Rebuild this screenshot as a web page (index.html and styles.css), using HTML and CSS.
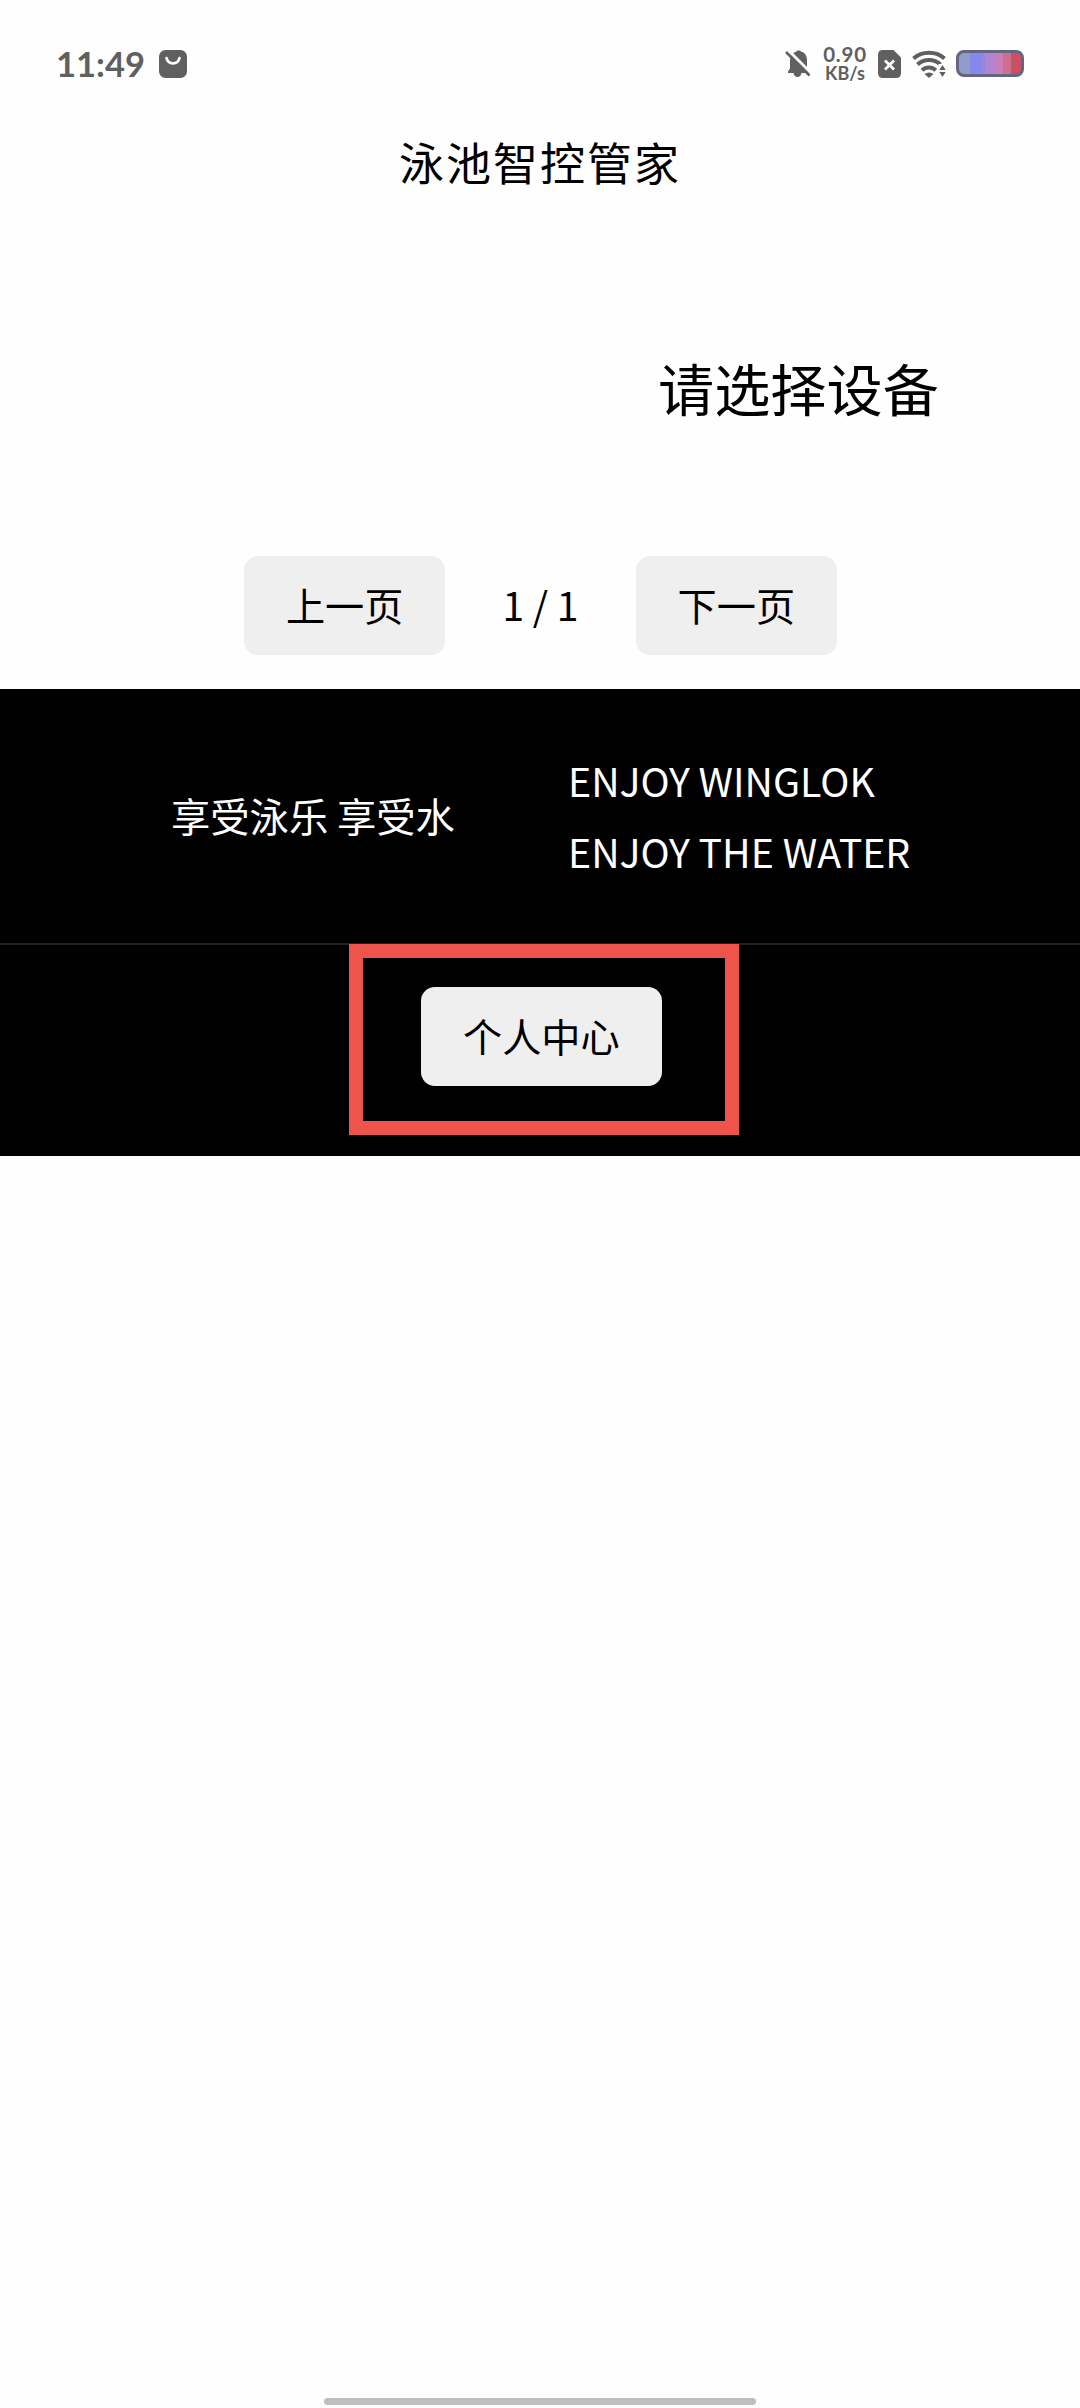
FILE: index.html
```html
<!DOCTYPE html>
<html lang="zh-CN">
<head>
<meta charset="utf-8">
<title>泳池智控管家</title>
<link rel="stylesheet" href="styles.css">
</head>
<body>
<div class="screen">
  <header class="status">
    <span class="clock">11:49</span>
    <svg class="app-icon" width="28" height="28" viewBox="0 0 28 28"><rect width="28" height="28" rx="6.5" fill="#606060"/><path d="M7.5 8c.8 3.500 3.300 5.300 6.500 5.300S19.700 11.500 20.500 8" fill="none" stroke="#fff" stroke-width="2.700" stroke-linecap="round"/></svg>
    <div class="indicators">
      <svg class="bell" width="26" height="28" viewBox="0 0 26 28"><path d="M3 23v-1.500l2-3V11c0-5 3-8.500 6-9.300C12 0 15 0 16 1.500c4 1 6 4.500 6 9v8l2 3V23h-7.500c-.5 2.500-2 4-4 4s-3.500-1.500-4-4z" fill="#606060"/><path d="M2.500-.5 27 24" stroke="#fff" stroke-width="3"/><path d="M1 2 24.500 25.500" stroke="#606060" stroke-width="2.500"/></svg>
      <div class="speed"><span class="rate">0.90</span><span class="unit">KB/s</span></div>
      <svg class="sim" width="23" height="28" viewBox="0 0 23 28"><path d="M5 0h10.500L23 7.500V23q0 5-5 5H5q-5 0-5-5V5Q0 0 5 0z" fill="#606060"/><path d="m7 10.500 9 9m0-9-9 9" stroke="#fff" stroke-width="2.800"/></svg>
      <svg class="wifi" width="34" height="28" viewBox="0 0 34 28"><g fill="none" stroke="#606060" stroke-width="4"><path d="M1.500 8.500C10 .8 24 .8 32.500 8.500"/><path d="M5.500 14.500c6.500-6 16.500-6 23 0"/><path d="M10 20.300c4-3.800 9.800-3.800 13.800 0"/></g><path d="M12.500 24q4.500-3 9 0L17 28z" fill="#606060"/><path d="M26.500 14h7.500V28h-7.500z" fill="#fff"/><path d="m30.500 15 3.200 5h-6.400zM27.300 22h6.400l-3.200 5z" fill="#606060"/></svg>
      <div class="battery"></div>
    </div>
  </header>
  <h1 class="title">泳池智控管家</h1>
  <main>
    <p class="prompt">请选择设备</p>
    <nav class="pager">
      <button class="btn">上一页</button>
      <span class="page">1 / 1</span>
      <button class="btn">下一页</button>
    </nav>
  </main>
  <footer class="footer">
    <div class="slogans">
      <p class="slogan-zh">享受泳乐 享受水</p>
      <p class="slogan-en">ENJOY WINGLOK<br>ENJOY THE WATER</p>
    </div>
    <div class="account">
      <div class="highlight"><button class="btn">个人中心</button></div>
    </div>
  </footer>
  <div class="home-bar"></div>
</div>
</body>
</html>
```
FILE: styles.css
```css
* { box-sizing: border-box; }
body {
  margin: 0;
  background: #fefefe;
  color: #000;
  font-family: "Noto Sans CJK SC", sans-serif;
}
p, h1 { margin: 0; font-weight: 400; }
.screen { display: flex; flex-direction: column; height: 2408px; overflow: hidden; }

.status {
  display: flex;
  align-items: center;
  height: 127px;
  padding: 0 56px;
  color: #606060;
  font-family: Lato, sans-serif;
  font-weight: 700;
}
.clock { width: 103px; font-size: 34.5px; letter-spacing: 0; }
.indicators { display: flex; align-items: center; margin-left: auto; }
.bell { margin-right: 12px; }
.speed { display: flex; flex-direction: column; align-items: center; width: 44px; margin-right: 11px; }
.rate { font-size: 20.5px; line-height: 20px; letter-spacing: .8px; }
.unit { font-size: 18px; line-height: 19px; }
.sim { margin-right: 11px; }
.wifi { margin-right: 10px; }
.battery {
  width: 68px;
  height: 27px;
  border: 3px solid #62667e;
  border-radius: 8px;
  background: linear-gradient(90deg, #929cca 0 11px, #8589eb 11px 23px, #9388d9 23px 26px, #b284d3 26px 36px, #c97fb6 36px 44px, #ce6f92 44px 52px, #ca5165 52px);
}

.title { height: 70px; line-height: 70px; text-align: center; font-size: 45px; letter-spacing: 2px; }
.prompt { height: 130px; margin: 125px 0 0 658px; font-size: 56.2px; line-height: 130px; }
.pager { display: flex; justify-content: center; gap: 57px; padding: 104px 0 34px; margin-left: 1px; }
.btn {
  height: 99px;
  padding: 0 42px 2px;
  border: 0;
  border-radius: 14px;
  background: #efefef;
  color: #000;
  font: 39.2px/97px "Noto Sans CJK SC", sans-serif;
}
.page { font-size: 39px; line-height: 97px; }

.footer { background: #000; color: #fff; }
.slogans { display: flex; align-items: center; height: 256px; border-bottom: 2px solid #222; }
.slogan-zh { width: 397px; margin-left: 171px; padding-bottom: 4px; font-size: 39.3px; }
.slogan-en { padding-bottom: 2px; font-size: 39.3px; line-height: 71px; }
.account { display: flex; height: 211px; padding-left: 349px; }
.highlight {
  width: 390px;
  height: 191px;
  margin-top: -1px;
  padding: 29px 0 0 58px;
  border: 14px solid #ee544c;
}
.home-bar { width: 432px; height: 7px; margin: auto auto 3px; border-radius: 4px; background: #bfbfbf; }
```
